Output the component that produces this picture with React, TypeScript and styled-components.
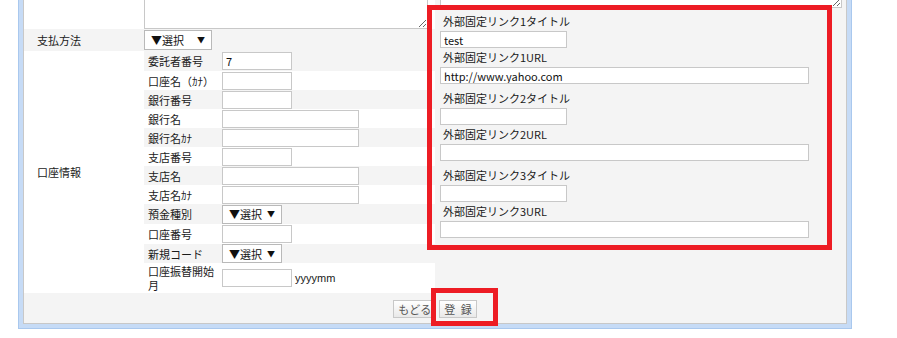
import React from 'react';
import styled, { createGlobalStyle } from 'styled-components';

const GlobalStyle = createGlobalStyle`
  html, body {
    margin: 0;
    padding: 0;
    background: #ffffff;
  }
  body {
    font-family: "Noto Sans CJK JP", "Noto Sans", sans-serif;
    font-size: 11px;
    color: #1a1a1a;
  }
`;

type SubField = {
  label: string;
  kind: 'input' | 'select';
  width?: number;
  value?: string;
  h: number;
  suffix?: string;
};

const accountFields: SubField[] = [
  { label: '委託者番号', kind: 'input', width: 70, value: '7', h: 20 },
  { label: '口座名（ｶﾅ）', kind: 'input', width: 70, h: 19 },
  { label: '銀行番号', kind: 'input', width: 70, h: 19 },
  { label: '銀行名', kind: 'input', width: 137, h: 19 },
  { label: '銀行名ｶﾅ', kind: 'input', width: 137, h: 19 },
  { label: '支店番号', kind: 'input', width: 70, h: 19 },
  { label: '支店名', kind: 'input', width: 137, h: 19 },
  { label: '支店名ｶﾅ', kind: 'input', width: 137, h: 19 },
  { label: '預金種別', kind: 'select', width: 60, h: 20 },
  { label: '口座番号', kind: 'input', width: 70, h: 20 },
  { label: '新規コード', kind: 'select', width: 60, h: 19 },
  { label: '口座振替開始月', kind: 'input', width: 70, h: 30, suffix: 'yyyymm' },
];

const linkFields = [
  { label: '外部固定リンク1タイトル', value: 'test', wide: false },
  { label: '外部固定リンク1URL', value: 'http://www.yahoo.com', wide: true },
  { label: '外部固定リンク2タイトル', value: '', wide: false },
  { label: '外部固定リンク2URL', value: '', wide: true },
  { label: '外部固定リンク3タイトル', value: '', wide: false },
  { label: '外部固定リンク3URL', value: '', wide: true },
];

const App: React.FC = () => {
  return (
    <Page>
      <GlobalStyle />
      <Frame>
        <Inner>
          <Body>
            <LeftPane>
              <MainRow $h={69}>
                <MainLabel />
                <div>
                  <NoteArea defaultValue="" />
                </div>
              </MainRow>
              <MainRow $h={22} $shade>
                <MainLabel>支払方法</MainLabel>
                <MainValue>
                  <FakeSelect $w={68} $h={20}>
                    <span>▼選択</span>
                    <Caret>▼</Caret>
                  </FakeSelect>
                </MainValue>
              </MainRow>
              <MainRow>
                <MainLabel>口座情報</MainLabel>
                <SubList>
                  {accountFields.map((f, i) => (
                    <SubRow key={f.label} $h={f.h} $shade={i % 2 === 0}>
                      <SubLabel $wrap={f.h > 20}>{f.label}</SubLabel>
                      <SubValue>
                        {f.kind === 'input' ? (
                          <TextBox $w={f.width ?? 70} $h={18} defaultValue={f.value ?? ''} />
                        ) : (
                          <FakeSelect $w={f.width ?? 60} $h={19}>
                            <span>▼選択</span>
                            <Caret>▼</Caret>
                          </FakeSelect>
                        )}
                        {f.suffix && <Suffix>{f.suffix}</Suffix>}
                      </SubValue>
                    </SubRow>
                  ))}
                </SubList>
              </MainRow>
            </LeftPane>
            <RightPane>
              <SideArea defaultValue="" />
              <LinkList>
                {linkFields.map((f) => (
                  <LinkField key={f.label} $wide={f.wide}>
                    <LinkLabel $wide={f.wide}>{f.label}</LinkLabel>
                    <TextBox $w={f.wide ? 369 : 127} $h={17} defaultValue={f.value} />
                  </LinkField>
                ))}
              </LinkList>
            </RightPane>
          </Body>
          <Footer>
            <ActionButton type="button">もどる</ActionButton>
            <ActionButton type="button">登{'\u2002'}録</ActionButton>
          </Footer>
        </Inner>
      </Frame>
      <Marker style={{ left: 427, top: 5, width: 405, height: 245 }} />
      <Marker style={{ left: 431, top: 288, width: 67, height: 38 }} />
    </Page>
  );
};

const Page = styled.div`
  position: relative;
  width: 897px;
  height: 338px;
  overflow: hidden;
`;

const Frame = styled.div`
  margin: -46px 0 0 18px;
  width: 834px;
  box-sizing: border-box;
  border: 1px solid #a9c8ee;
  background: #c6dbf6;
  padding: 4px;
`;

const Inner = styled.div`
  border: 1px solid #c8c8c8;
  background: #f4f4f4;
`;

const Body = styled.div`
  display: flex;
  align-items: stretch;
`;

const LeftPane = styled.div`
  width: 411px;
  background: #ffffff;
  display: flex;
  flex-direction: column;
`;

const MainRow = styled.div<{ $h?: number; $shade?: boolean }>`
  display: grid;
  grid-template-columns: 120px 291px;
  height: ${(p) => (p.$h ? `${p.$h}px` : 'auto')};
  background: ${(p) => (p.$shade ? '#f4f4f4' : '#ffffff')};
`;

const MainLabel = styled.div`
  display: flex;
  align-items: center;
  padding-left: 13px;
`;

const MainValue = styled.div`
  display: flex;
  align-items: center;
`;

const NoteArea = styled.textarea`
  display: block;
  box-sizing: border-box;
  margin-top: 2px;
  width: 284px;
  height: 67px;
  border: 1px solid #c8c8c8;
  padding: 2px;
  font: inherit;
  background: #ffffff;
`;

const SubList = styled.div`
  display: flex;
  flex-direction: column;
`;

const SubRow = styled.div<{ $h: number; $shade: boolean }>`
  display: grid;
  grid-template-columns: 78px 1fr;
  height: ${(p) => p.$h}px;
  background: ${(p) => (p.$shade ? '#f4f4f4' : '#ffffff')};
`;

const SubLabel = styled.div<{ $wrap: boolean }>`
  display: flex;
  align-items: center;
  padding: 0 4px;
  line-height: 14px;
  word-break: break-all;
`;

const SubValue = styled.div`
  display: flex;
  align-items: center;
`;

const TextBox = styled.input<{ $w: number; $h: number }>`
  box-sizing: border-box;
  width: ${(p) => p.$w}px;
  height: ${(p) => p.$h}px;
  margin: 0;
  padding: 0 3px;
  border: 1px solid #c8c8c8;
  background: #ffffff;
  font: inherit;
  font-size: 11px;
  color: #111111;
  outline: none;
`;

const FakeSelect = styled.div<{ $w: number; $h: number }>`
  box-sizing: border-box;
  width: ${(p) => p.$w}px;
  height: ${(p) => p.$h}px;
  display: flex;
  align-items: center;
  justify-content: space-between;
  padding: 0 6px 0 6px;
  border: 1px solid #b9b9b9;
  background: #ffffff;
  color: #111111;
  white-space: nowrap;
`;

const Caret = styled.span`
  font-size: 8px;
  line-height: 1;
`;

const Suffix = styled.span`
  margin-left: 3px;
  font-family: "Liberation Sans", Arial, sans-serif;
  font-size: 11px;
`;

const RightPane = styled.div`
  flex: 1;
  background: #f4f4f4;
  padding-left: 5px;
`;

const SideArea = styled.textarea`
  display: block;
  box-sizing: border-box;
  margin-top: 2px;
  width: 402px;
  height: 46px;
  border: 1px solid #c8c8c8;
  padding: 2px;
  font: inherit;
  background: #ffffff;
`;

const LinkList = styled.div`
  display: flex;
  flex-direction: column;
  padding-top: 3px;
`;

const LinkField = styled.div<{ $wide: boolean }>`
  display: flex;
  flex-direction: column;
  margin-bottom: ${(p) => (p.$wide ? '4px' : '0')};
`;

const LinkLabel = styled.div<{ $wide: boolean }>`
  height: ${(p) => (p.$wide ? '19px' : '20px')};
  line-height: ${(p) => (p.$wide ? '19px' : '20px')};
  padding-left: 3px;
  white-space: nowrap;
`;

const Footer = styled.div`
  height: 30px;
  display: flex;
  align-items: center;
  justify-content: center;
  gap: 3px;
  padding-top: 1px;
  box-sizing: border-box;
`;

const ActionButton = styled.button`
  height: 18px;
  margin: 0;
  padding: 0 4px;
  border: 1px solid #c8c8c8;
  background: linear-gradient(#ffffff, #e9e9e9);
  color: #555555;
  font-family: "Noto Sans CJK JP", "Noto Sans", sans-serif;
  font-size: 11px;
  line-height: 16px;
  cursor: pointer;
`;

const Marker = styled.div`
  position: absolute;
  box-sizing: border-box;
  border: 5px solid #ed1c24;
  pointer-events: none;
`;

export default App;
